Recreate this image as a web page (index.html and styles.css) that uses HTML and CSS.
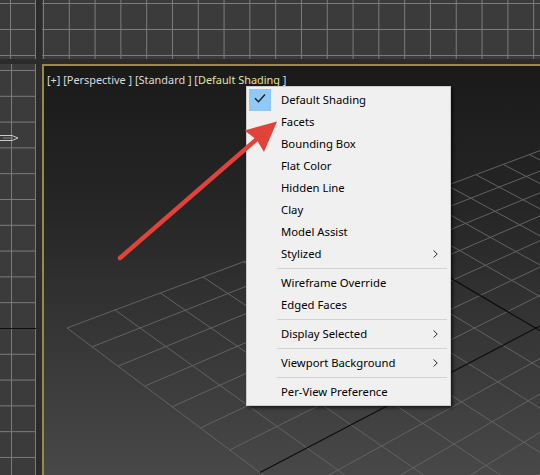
FILE: index.html
```html
<!DOCTYPE html>
<html>
<head>
<meta charset="utf-8">
<link rel="stylesheet" href="styles.css">
</head>
<body>
<div class="screen">
  <div class="pane pane-tl"></div>
  <div class="pane pane-top"></div>
  <div class="pane pane-left">
    <svg class="tripod" viewBox="0 0 20 10" width="20" height="10">
      <path d="M0 2.5H12L18 5L12 7.5H0" fill="none" stroke="#d8d8d8" stroke-width="0.9"/>
      <path d="M3 5H13" fill="none" stroke="#9a9a9a" stroke-width="0.8"/>
    </svg>
  </div>
  <div class="pane viewport">
    <svg class="grid" viewBox="0 0 540 475" width="540" height="475">
      <g stroke="#626262" stroke-width="1" fill="none">
        <line x1="67" y1="328" x2="554.4" y2="145.2"/>
        <line x1="92.1" y1="346.8" x2="577.1" y2="156.5"/>
        <line x1="118" y1="366.2" x2="600.2" y2="168.1"/>
        <line x1="144.7" y1="386.2" x2="623.8" y2="179.9"/>
        <line x1="172.2" y1="406.8" x2="647.9" y2="191.9"/>
        <line x1="200.5" y1="428" x2="672.6" y2="204.2"/>
        <line x1="229.8" y1="449.9" x2="697.8" y2="216.8"/>
        <line x1="291.2" y1="495.9" x2="749.8" y2="242.8"/>
        <line x1="323.4" y1="520.1" x2="776.7" y2="256.2"/>
        <line x1="356.7" y1="545" x2="804.2" y2="270"/>
        <line x1="391.2" y1="570.9" x2="832.3" y2="284"/>
        <line x1="426.9" y1="597.6" x2="861.1" y2="298.4"/>
        <line x1="463.8" y1="625.3" x2="890.5" y2="313.1"/>
        <line x1="502.1" y1="654" x2="920.7" y2="328.2"/>
        <line x1="67" y1="328" x2="502.1" y2="654"/>
        <line x1="115" y1="310" x2="546.1" y2="619.7"/>
        <line x1="160.3" y1="293" x2="587" y2="587.9"/>
        <line x1="203.1" y1="277" x2="625.2" y2="558.2"/>
        <line x1="243.6" y1="261.8" x2="660.9" y2="530.4"/>
        <line x1="282" y1="247.4" x2="694.3" y2="504.4"/>
        <line x1="318.4" y1="233.7" x2="725.6" y2="480"/>
        <line x1="386" y1="208.4" x2="782.8" y2="435.5"/>
        <line x1="417.4" y1="196.6" x2="809" y2="415.1"/>
        <line x1="447.3" y1="185.4" x2="833.8" y2="395.8"/>
        <line x1="475.9" y1="174.7" x2="857.3" y2="377.6"/>
        <line x1="503.2" y1="164.4" x2="879.5" y2="360.2"/>
        <line x1="529.4" y1="154.6" x2="900.6" y2="343.8"/>
        <line x1="554.4" y1="145.2" x2="920.7" y2="328.2"/>
      </g>
      <g stroke="#0c0c0c" stroke-width="1.1" fill="none">
        <line x1="260" y1="472.6" x2="723.5" y2="229.7"/>
        <line x1="353" y1="220.7" x2="755.1" y2="457.1"/>
      </g>
    </svg>

    <div class="vp-label">[+] [Perspective ] [Standard ] [<span class="hl">Default Shading</span> ]</div>

    <div class="menu">
      <div class="item">
        <span class="icon checked">
          <svg viewBox="0 0 22 22" width="22" height="22"><path d="M6 9.2L9.5 12.8L16 5.5" fill="none" stroke="#1b1b1b" stroke-width="1.3"/></svg>
        </span>
        <span class="label">Default Shading</span>
      </div>
      <div class="item"><span class="icon"></span><span class="label">Facets</span></div>
      <div class="item"><span class="icon"></span><span class="label">Bounding Box</span></div>
      <div class="item"><span class="icon"></span><span class="label">Flat Color</span></div>
      <div class="item"><span class="icon"></span><span class="label">Hidden Line</span></div>
      <div class="item"><span class="icon"></span><span class="label">Clay</span></div>
      <div class="item"><span class="icon"></span><span class="label">Model Assist</span></div>
      <div class="item"><span class="icon"></span><span class="label">Stylized</span>
        <svg class="sub" viewBox="0 0 5 8" width="5" height="8"><path d="M0.7 0.5L4.2 4L0.7 7.5" fill="none" stroke="#222" stroke-width="1"/></svg>
      </div>
      <div class="sep"><span></span></div>
      <div class="item"><span class="icon"></span><span class="label">Wireframe Override</span></div>
      <div class="item"><span class="icon"></span><span class="label">Edged Faces</span></div>
      <div class="sep"><span></span></div>
      <div class="item"><span class="icon"></span><span class="label">Display Selected</span>
        <svg class="sub" viewBox="0 0 5 8" width="5" height="8"><path d="M0.7 0.5L4.2 4L0.7 7.5" fill="none" stroke="#222" stroke-width="1"/></svg>
      </div>
      <div class="sep"><span></span></div>
      <div class="item"><span class="icon"></span><span class="label">Viewport Background</span>
        <svg class="sub" viewBox="0 0 5 8" width="5" height="8"><path d="M0.7 0.5L4.2 4L0.7 7.5" fill="none" stroke="#222" stroke-width="1"/></svg>
      </div>
      <div class="sep"><span></span></div>
      <div class="item"><span class="icon"></span><span class="label">Per-View Preference</span></div>
    </div>

    <svg class="arrow" viewBox="0 0 540 475" width="540" height="475">
      <line x1="120" y1="258" x2="257" y2="139" stroke="#e1433a" stroke-width="4.5" stroke-linecap="round"/>
      <path d="M277 121.5L244.5 130.5L256.5 139.5L264 152Z" fill="#e1433a"/>
    </svg>
  </div>
</div>
</body>
</html>
```

FILE: styles.css
```css
* {
  box-sizing: border-box;
}

html,
body {
  margin: 0;
  padding: 0;
}

body {
  width: 540px;
  height: 475px;
  overflow: hidden;
  background: #2b2b2b;
  font-family: "Noto Sans", "Open Sans", sans-serif;
}

.screen {
  display: grid;
  grid-template-columns: 36px 1fr;
  grid-template-rows: 59px 1fr;
  column-gap: 6px;
  row-gap: 5px;
  width: 540px;
  height: 475px;
  background: #2b2b2b;
}

.pane {
  background-color: #3b3b3b;
}

.pane-tl {
  background-image:
    linear-gradient(to right, #7b7b7b 1px, transparent 1px),
    linear-gradient(to bottom, #7b7b7b 1px, transparent 1px);
  background-size: 25px 26px;
  background-position: 10px 3px;
}

.pane-top {
  background-image:
    linear-gradient(to right, #7b7b7b 1px, transparent 1px),
    linear-gradient(to bottom, #7b7b7b 1px, transparent 1px);
  background-size: 25.8px 26px;
  background-position: 1px 3px;
}

.pane-left {
  position: relative;
  background-image:
    linear-gradient(to bottom, transparent 264px, #0f0f0f 264px, #0f0f0f 265px, transparent 265px),
    linear-gradient(to right, #7b7b7b 1px, transparent 1px),
    linear-gradient(to bottom, #7b7b7b 1px, transparent 1px);
  background-size: 100% 100%, 24px 25.8px, 24px 25.8px;
  background-position: 0 0, 11px 6px, 11px 6px;
  background-repeat: no-repeat, repeat, repeat;
}

.tripod {
  position: absolute;
  left: 0;
  top: 69px;
}

.viewport {
  position: relative;
  overflow: hidden;
  border-top: 2px solid #9c874c;
  border-left: 2px solid #9c874c;
  background: linear-gradient(to bottom, #1a1a1a 0%, #262626 35%, #484848 100%);
}

.grid {
  position: absolute;
  left: -44px;
  top: -66px;
}

.vp-label {
  position: relative;
  padding: 6px 0 0 3px;
  font-size: 10.9px;
  line-height: 15px;
  color: #dcdcdc;
  white-space: pre;
}

.hl {
  color: #e3e39c;
}

.menu {
  position: absolute;
  left: 202px;
  top: 20px;
  width: 205px;
  padding: 2px 0;
  background: #f0f0f0;
  border: 1px solid #cdcdcd;
  box-shadow: 2px 2px 3px rgba(0, 0, 0, 0.6);
  font-size: 11.3px;
  color: #000;
}

.item {
  display: flex;
  align-items: center;
  height: 22px;
  padding-left: 2px;
}

.icon {
  width: 22px;
  height: 22px;
  margin-right: 10px;
  flex: none;
}

.icon.checked {
  background: #90c8f6;
}

.icon svg {
  display: block;
}

.label {
  flex: 1;
  line-height: 22px;
  white-space: nowrap;
}

.sub {
  flex: none;
  margin-right: 12px;
}

.sep {
  height: 7px;
  display: flex;
  align-items: center;
  padding: 0 3px 0 30px;
}

.sep span {
  flex: 1;
  height: 1px;
  background: #d2d2d2;
}

.arrow {
  position: absolute;
  left: -44px;
  top: -66px;
  pointer-events: none;
}
```
